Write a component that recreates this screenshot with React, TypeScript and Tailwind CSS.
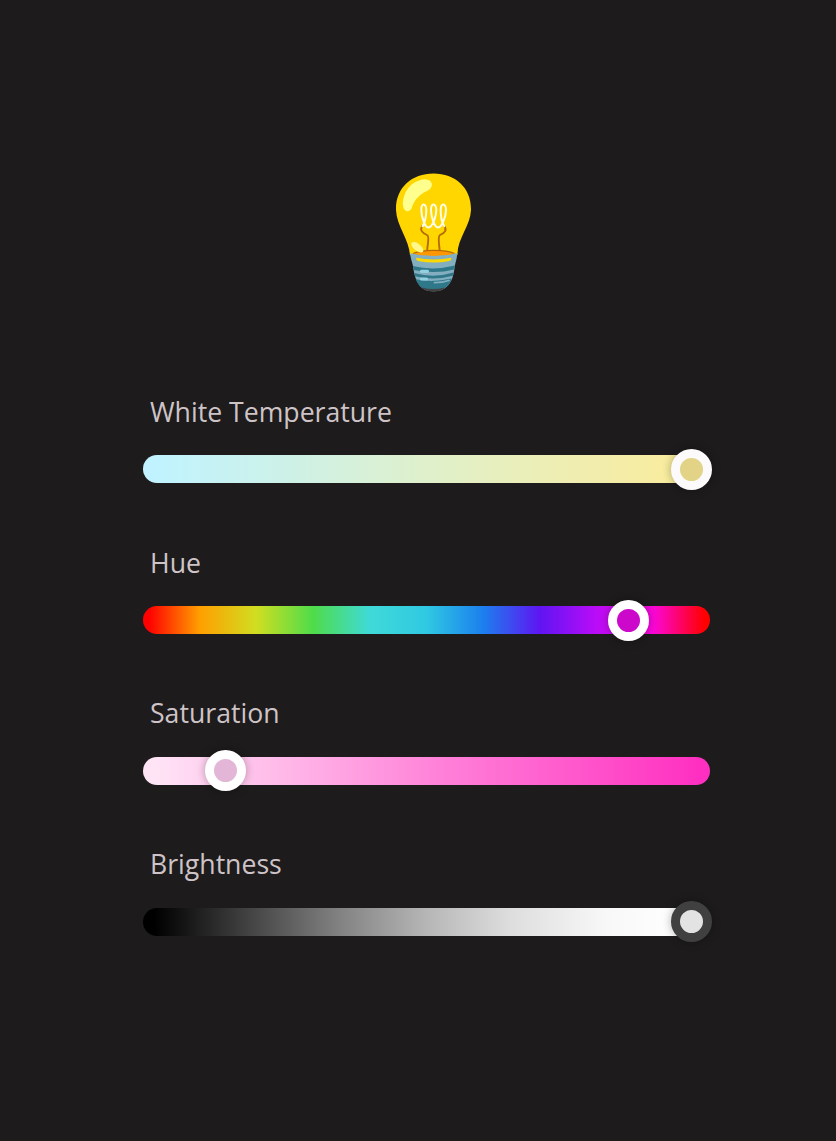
import React from "react";

type Slider = {
  label: string;
  labelStyle: string;
  track: string;
  thumb: string;
  offset: number;
};

const sliders: Slider[] = [
  {
    label: "White Temperature",
    labelStyle: "h-[61.3px]",
    track: "bg-[linear-gradient(90deg,#c0f3ff_2%,#cdf1e8_25%,#dff0cb_50%,#efedb1_75%,#fbec99_98%)]",
    thumb: "border-[#fcfafb] bg-[#e2d386]",
    offset: 528.3,
  },
  {
    label: "Hue",
    labelStyle: "h-[61.3px]",
    track:
      "bg-[linear-gradient(90deg,#ff0000_1%,#ff9f00_10%,#d0de21_20%,#4fdc4a_30%,#3fdad8_40%,#2fc9e2_50%,#1c7fee_60%,#5f15f2_70%,#ba0cf8_80%,#fb07d9_90%,#ff0000_99%)]",
    thumb: "border-white bg-[#cc08ca]",
    offset: 465,
  },
  {
    label: "Saturation",
    labelStyle: "-mt-px h-[62.3px]",
    track: "bg-[linear-gradient(90deg,#ffe4f6_2%,#ffb0e6_29%,#ff80d8_53%,#ff58cc_76%,#ff30c1_98%)]",
    thumb: "border-white bg-[#e3b6d7]",
    offset: 61.7,
  },
  {
    label: "Brightness",
    labelStyle: "-mt-px h-[62.3px]",
    track: "bg-[linear-gradient(90deg,#000000_2%,#484848_20%,#838383_35%,#b6b6b6_50%,#dedede_65%,#f8f8f8_82%,#ffffff_95%)]",
    thumb: "border-[#404040] bg-[#e3e3e3]",
    offset: 528.3,
  },
];

function Bulb() {
  return (
    <svg width="100" height="130" viewBox="383 165 100 130" fill="none" role="img" aria-label="Light bulb">
      {/* glass */}
      <path d="M396 210C395.5 188 411.5 173.5 433.5 173.5C455.5 173.5 471.5 188 471 210C470.5 226 457 239 457.5 255Q434 262 410 255C409 239 396.5 226 396 210Z" fill="#ffd600" />
      <path d="M412.5 254.5Q418 250.5 433.5 250.3Q450 250.5 455 254.5L448 258H418Z" fill="#ff9800" />
      <path d="M413 253.5Q420 250.3 433.5 250.3Q448 250.3 454.5 253.5" stroke="#b66a05" strokeWidth="1.3" />
      {/* screw base */}
      <path d="M410.2 253.5Q433.500 258.500 457.200 253.500C457 259 455.500 262 454.800 266C454 272 453 278 450.800 281.500C448 286 444 291.300 433.500 291.300C423 291.300 419.500 286 417.300 281.500C415 278 413.800 272 413 266C412.300 262 410.500 259 410.200 253.500Z" fill="#82aec0" />
      <path d="M412.900 266Q433 271 454.900 265.500L454.300 269.500Q435 274.300 413.700 270Z" fill="#2f7889" />
      <path d="M414.200 273Q434 278.500 453.500 272.500L452.800 275.700Q434 281 415 276.300Z" fill="#2f7889" />
      <path d="M415.700 279.200Q432 283 451.800 278.500C450 285 444 291.300 433.500 291.300C423 291.300 418 285 415.700 279.200Z" fill="#2f7889" />
      <path d="M434.500 282.700Q442 282.700 449 280.500" stroke="#82aec0" strokeWidth="1.800" strokeLinecap="round" />
      <path d="M422 287.500Q433 290.500 445 287.500Q442 291.500 433.500 291.500Q425 291.500 422 287.500Z" fill="#424242" />
      <path d="M416 257.800Q434 261 451.500 257.800Q451.500 260.500 449.500 261Q434 264 418 261Q416 260.500 416 257.800Z" fill="#fdd800" />
      <path d="M421.500 271.300H427.500M421.500 279H426.500" stroke="#94d1e0" strokeWidth="3.200" strokeLinecap="round" />
      <path d="M411 254.300Q417 257 433.500 257Q450 257 456.500 254.300" stroke="#83b1c4" strokeWidth="2.200" />
      {/* reflections */}
      <path d="M403 206C402 194 410 180.500 425 179.300C433 179.500 434 187 428 190.500C416 196 414 202 411.500 208.500C409 213 404 212 403 206Z" fill="#ffff8d" />
      <ellipse cx="417.300" cy="247.200" rx="7.200" ry="3.500" transform="rotate(38 417.300 247.200)" fill="#fff78a" />
      {/* filament */}
      <path d="M422.500 225.500C419.500 230 422 232.800 427 235C430 236.500 427.500 243 427.200 250.500M444 225.500C447.500 230 445 232.800 440 235C437.500 236.500 439 243 439.700 250.500" stroke="#b66a05" strokeWidth="1.900" />
      <path d="M422.500 226.300C425 223 426.500 215 426.300 209.500C426 202.700 421.300 202.700 421.300 210C421.300 217 425 227.500 428.300 227.500C432.500 227.500 436.500 216 436.300 209.500C436 202.700 431 202.700 431 210C431 217 434.500 227.500 438 227.500C442 227.500 446.100 216 446 209.500C445.800 202.700 440.700 202.700 440.700 210C440.700 215 442 223 444.300 226.300" stroke="#fffde7" strokeWidth="2" strokeLinecap="round" />
    </svg>
  );
}

function SliderRow({ label, labelStyle, track, thumb, offset }: Slider) {
  return (
    <section className="flex h-[150.85px] flex-col">
      <h2 className={`shrink-0 pl-[7px] text-[26.65px] leading-9 font-normal text-[#cec4c7] ${labelStyle}`}>{label}</h2>
      <div className={`flex h-7 shrink-0 items-center rounded-full ${track}`}>
        <div
          className={`size-[41px] shrink-0 rounded-full border-[9px] shadow-[0_0_10px_rgba(0,0,0,0.3)] ${thumb}`}
          style={{ marginLeft: offset }}
        />
      </div>
    </section>
  );
}

export default function App() {
  return (
    <main className="flex h-[1141px] w-[836px] flex-col overflow-hidden bg-[#1d1b1c] pt-[165px] font-['Open_Sans',sans-serif]">
      <div className="pl-[383px]">
        <Bulb />
      </div>
      <div className="mt-[99px] ml-[143px] w-[567px]">
        {sliders.map((slider) => (
          <SliderRow key={slider.label} {...slider} />
        ))}
      </div>
    </main>
  );
}
